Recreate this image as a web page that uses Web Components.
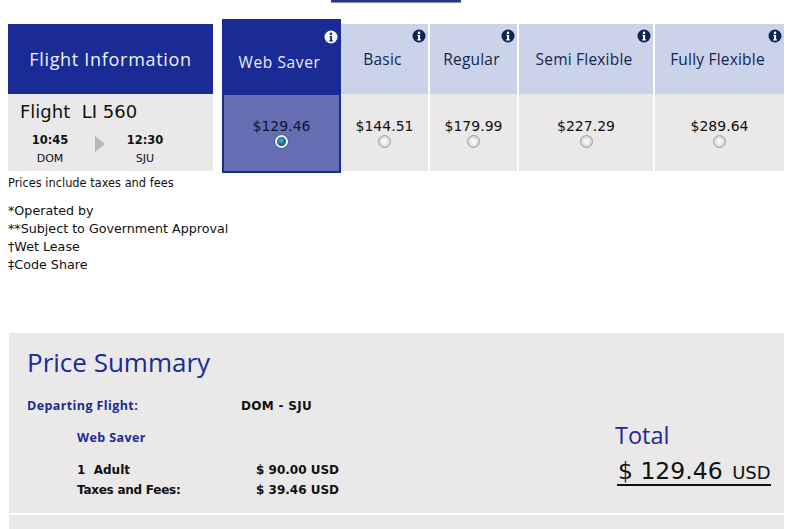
<!DOCTYPE html>
<html>
<head>
<meta charset="utf-8">
<title>Price Summary</title>
<style>
  html, body { margin: 0; padding: 0; background: #fff; height: 529px; overflow: hidden; }
  body { font-family: 'DejaVu Sans', Verdana, sans-serif; }
</style>
</head>
<body>
<fare-page></fare-page>

<template id="tpl-info">
  <style>
    :host { display: block; width: 14px; height: 14px; }
    svg { display: block; }
  </style>
  <svg width="14" height="14" viewBox="0 0 14 14">
    <circle cx="7" cy="7" r="6.5" fill="var(--info-bg, #0b2350)"/>
    <circle cx="7" cy="3.9" r="1.3" fill="var(--info-fg, #fff)"/>
    <path d="M5.4 5.9h2.7v4.3h.9v1.2H5.2v-1.2h.9V7.1h-.7z" fill="var(--info-fg, #fff)"/>
  </svg>
</template>

<template id="tpl-radio">
  <style>
    :host { display: block; width: 13px; height: 13px; border-radius: 50%; box-sizing: border-box;
      border: 1px solid #a2a2a2; background: radial-gradient(circle at 50% 50%, #f6f6f6 0 25%, #cfcfcf 75%, #e6e6e6 100%); }
    :host([checked]) { border: 2px solid #f1f3f6; background: radial-gradient(circle at 45% 40%, #5fb0c4 0, #167a92 45%, #0c3f55 100%); box-shadow: 0 0 0 .5px #3c4a80; }
  </style>
</template>

<template id="tpl-fare">
  <style>
    :host { display: flex; flex-direction: column; width: var(--w); margin-top: 5px; height: 147px; }
    .head { height: 70px; background: #cbd3eb; color: #12254f; position: relative; display: flex; align-items: center; justify-content: center;
      font: 15.5px 'Open Sans', sans-serif; letter-spacing: .2px; padding-right: 4px; box-sizing: border-box; }
    info-icon { position: absolute; top: 5px; right: 2px; }
    .body { flex: 1; background: #eae8e9; color: #101010; display: flex; flex-direction: column; align-items: center; padding-top: 24px; box-sizing: border-box; font-size: 14px; line-height: 16px; }
    radio-dot { margin-top: 1px; }
    :host([selected]) { margin-top: 0; height: 154px; background: #1a2b96; padding: 0 2px 2px; box-sizing: border-box; }
    :host([selected]) .head { height: 76px; margin: 0 -2px; background: #1a2b96; color: #e8ecf8; padding: 10px 4px 0 0; letter-spacing: .6px; }
    :host([selected]) info-icon { top: 11px; right: 3px; --info-bg: #fff; --info-fg: #1a2b96; }
    :host([selected]) .body { background: #656eb2; color: #0e1530; padding-top: 23px; }
  </style>
  <div class="head"><slot></slot><info-icon></info-icon></div>
  <div class="body"><span id="price"></span><radio-dot></radio-dot></div>
</template>

<template id="tpl-flight">
  <style>
    :host { display: flex; flex-direction: column; width: 205px; margin: 5px 9px 0 0; height: 147px; }
    .head { height: 70px; background: #1a2b96; color: #eef1fb; display: flex; align-items: center; justify-content: center; font: 18px 'Open Sans', sans-serif; letter-spacing: .7px; }
    .body { flex: 1; background: #eae8e9; color: #111; padding: 8px 12px 0; box-sizing: border-box; }
    .no { font-size: 18px; line-height: 20px; }
    .times { display: grid; grid-template-columns: 60px 40px 50px; margin-top: 10px; text-align: center; justify-content: start; }
    .times b { display: block; font-size: 11.5px; line-height: 16px; }
    .times span { display: block; font-size: 11px; line-height: 21px; }
    .arrow { width: 0; height: 0; justify-self: center; align-self: start; margin-top: 4px; border-left: 10px solid #b9b9b9; border-top: 8px solid transparent; border-bottom: 8px solid transparent; }
  </style>
  <div class="head"><slot></slot></div>
  <div class="body">
    <div class="no">Flight&nbsp; LI 560</div>
    <div class="times">
      <div><b>10:45</b><span>DOM</span></div>
      <div class="arrow"></div>
      <div><b>12:30</b><span>SJU</span></div>
    </div>
  </div>
</template>

<template id="tpl-notes">
  <style>
    :host { display: block; margin: 1px 0 0 8px; color: #111; font-size: 12.7px; line-height: 18px; }
    .inc { font-size: 11.4px; line-height: 18px; margin-bottom: 10px; }
  </style>
  <div class="inc">Prices include taxes and fees</div>
  <div>*Operated by</div>
  <div>**Subject to Government Approval</div>
  <div>†Wet Lease</div>
  <div>‡Code Share</div>
</template>

<template id="tpl-summary">
  <style>
    :host { display: block; margin: 59px 4px 0 9px; }
    .panel { height: 180px; background: #eae8e9; padding: 11px 13px 0 18px; box-sizing: border-box; display: flex; justify-content: space-between; }
    h2 { margin: 0; font: 26px/36px 'Open Sans', sans-serif; color: #1a2b96; }
    .row { display: grid; font-size: 12px; font-weight: bold; color: #111; }
    .dep { grid-template-columns: 214px auto; margin-top: 18px; line-height: 16px; }
    .dep > span:last-child { letter-spacing: .3px; }
    .blue { color: #1a2b96; font: 700 12.5px/16px 'Open Sans', sans-serif; letter-spacing: .4px; }
    .fare { margin: 16px 0 0 50px; }
    .lines { margin: 14px 0 0 50px; grid-template-columns: 179px auto; line-height: 20px; }
    .tax { letter-spacing: -.25px; }
    .total { margin-top: 76px; width: 154px; }
    .total .t { font: 23.5px/30px 'Open Sans', sans-serif; color: #1a2b96; margin-left: -2px; }
    .amount { border-bottom: 2px solid #111; font-size: 23.5px; line-height: 22px; color: #111; margin-top: 10px; padding-left: 1px; white-space: nowrap; }
    .amount small { font-size: 18px; margin-left: 2px; }
    .strip { height: 14px; margin-top: 2px; background: #eae8e9; }
  </style>
  <div class="panel">
    <div>
      <h2>Price Summary</h2>
      <div class="row dep"><span class="blue">Departing Flight:</span><span>DOM - SJU</span></div>
      <div class="fare blue">Web Saver</div>
      <div class="row lines">
        <span>1&nbsp; Adult</span><span>$ 90.00 USD</span>
        <span class="tax">Taxes and Fees:</span><span>$ 39.46 USD</span>
      </div>
    </div>
    <div class="total">
      <div class="t">Total</div>
      <div class="amount">$ 129.46 <small>USD</small></div>
    </div>
  </div>
  <div class="strip"></div>
</template>

<template id="tpl-page">
  <style>
    :host { display: block; }
    .tab { width: 130px; height: 2px; margin-left: 331px; background: #27357f; box-shadow: 0 1px 1px #8088b0; }
    .fares { display: flex; padding: 17px 4px 0 8px; }
    .fares fare-col + fare-col { margin-left: 2px; }
    .fares fare-col[selected] + fare-col { margin-left: 0; }
  </style>
  <div class="tab"></div>
  <div class="fares">
    <flight-info>Flight Information</flight-info>
    <fare-col selected price="$129.46" style="--w:119px">Web Saver</fare-col>
    <fare-col price="$144.51" style="--w:87px">Basic</fare-col>
    <fare-col price="$179.99" style="--w:87px">Regular</fare-col>
    <fare-col price="$227.29" style="--w:134px">Semi Flexible</fare-col>
    <fare-col price="$289.64" style="--w:129px">Fully Flexible</fare-col>
  </div>
  <fare-notes></fare-notes>
  <price-summary></price-summary>
</template>

<script>
function stamp(el, id) {
  el.shadow = el.attachShadow({ mode: 'open' });
  el.shadow.appendChild(document.getElementById(id).content.cloneNode(true));
}

class InfoIcon extends HTMLElement {
  constructor() { super(); stamp(this, 'tpl-info'); }
}
class RadioDot extends HTMLElement {
  constructor() { super(); stamp(this, 'tpl-radio'); }
}
class FareCol extends HTMLElement {
  constructor() { super(); stamp(this, 'tpl-fare'); }
  connectedCallback() {
    this.shadow.querySelector('#price').textContent = this.getAttribute('price');
    if (this.hasAttribute('selected')) this.shadow.querySelector('radio-dot').setAttribute('checked', '');
  }
}
class FlightInfo extends HTMLElement {
  constructor() { super(); stamp(this, 'tpl-flight'); }
}
class FareNotes extends HTMLElement {
  constructor() { super(); stamp(this, 'tpl-notes'); }
}
class PriceSummary extends HTMLElement {
  constructor() { super(); stamp(this, 'tpl-summary'); }
}
class FarePage extends HTMLElement {
  constructor() { super(); stamp(this, 'tpl-page'); }
}

customElements.define('info-icon', InfoIcon);
customElements.define('radio-dot', RadioDot);
customElements.define('fare-col', FareCol);
customElements.define('flight-info', FlightInfo);
customElements.define('fare-notes', FareNotes);
customElements.define('price-summary', PriceSummary);
customElements.define('fare-page', FarePage);
</script>
</body>
</html>
